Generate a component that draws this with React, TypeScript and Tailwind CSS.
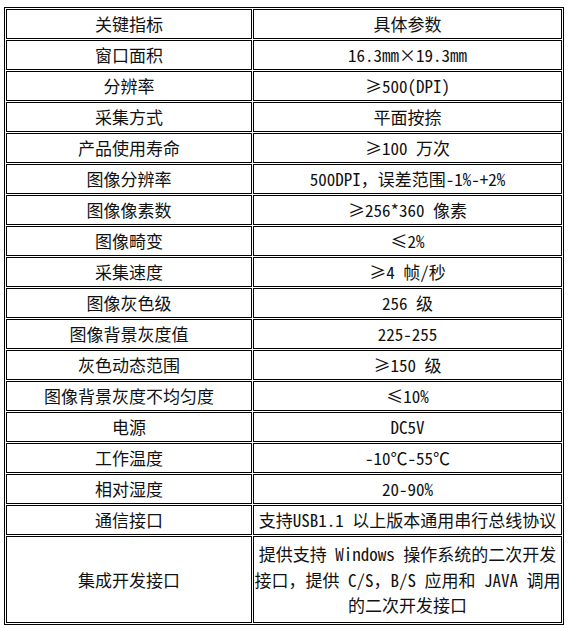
const rows: [string, string][] = [
  ['关键指标', '具体参数'],
  ['窗口面积', '16.3mm×19.3mm'],
  ['分辨率', '≥500(DPI)'],
  ['采集方式', '平面按捺'],
  ['产品使用寿命', '≥100 万次'],
  ['图像分辨率', '500DPI，误差范围-1%-+2%'],
  ['图像像素数', '≥256*360 像素'],
  ['图像畸变', '≤2%'],
  ['采集速度', '≥4 帧/秒'],
  ['图像灰色级', '256 级'],
  ['图像背景灰度值', '225-255'],
  ['灰色动态范围', '≥150 级'],
  ['图像背景灰度不均匀度', '≤10%'],
  ['电源', 'DC5V'],
  ['工作温度', '-10℃-55℃'],
  ['相对湿度', '20-90%'],
  ['通信接口', '支持USB1.1 以上版本通用串行总线协议'],
];

const cell =
  'border border-black flex items-center justify-center text-center whitespace-nowrap overflow-hidden';

export default function App() {
  return (
    <div className="min-h-screen bg-white pt-[7px] pl-[4px] font-['Noto_Sans_Mono_CJK_SC','Noto_Sans_CJK_SC',sans-serif] font-light text-[17px] text-[#111]">
      <div className="inline-grid grid-cols-[246px_309px] gap-[1px] border border-black p-[1px]">
        {rows.map(([k, v]) => (
          <div key={k} className="contents">
            <div className={`${cell} h-[30px]`}>{k}</div>
            <div className={`${cell} h-[30px]`}>{v}</div>
          </div>
        ))}
        <div className={`${cell} h-[87px]`}>集成开发接口</div>
        <div className={`${cell} h-[87px] flex-col leading-[25.5px]`}>
          <span>提供支持 Windows 操作系统的二次开发</span>
          <span>接口，提供 C/S，B/S 应用和 JAVA 调用</span>
          <span>的二次开发接口</span>
        </div>
      </div>
    </div>
  );
}
